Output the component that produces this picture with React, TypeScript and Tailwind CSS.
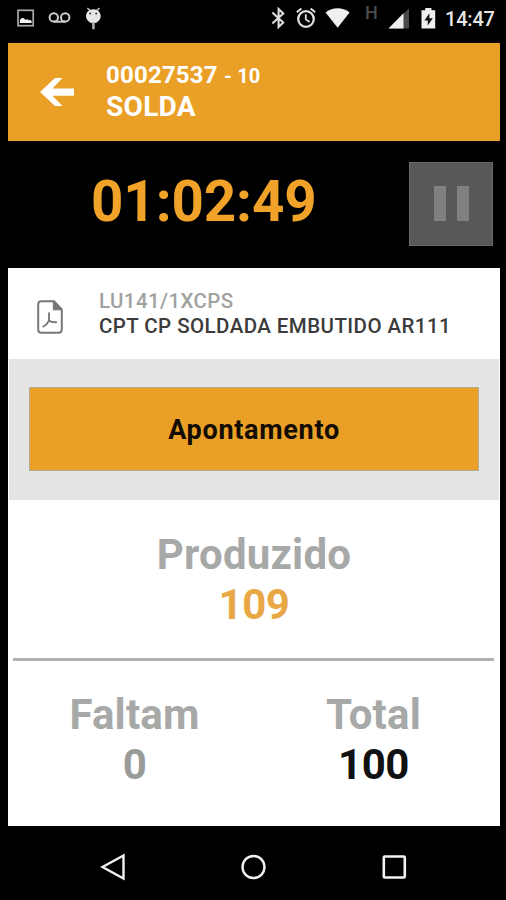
import type { ReactNode } from "react";

function StatusBar() {
  return (
    <div className="flex h-[43px] items-start pt-[7px] pl-[17px] text-[#e6e6e6]">
      {/* picture */}
      <svg width="18" height="22" viewBox="0 0 18 22" fill="none">
        <rect x="1" y="3.3" width="15.2" height="15.4" stroke="#a8a8a8" strokeWidth="1.7" />
        <path d="M2.800 16v-2.600q1-2.800 3.400-2.400 1.600.4 2.200 2 2-1.400 3.200.2 2.200-.8 3 .8v2z" fill="#f6f6f6" />
      </svg>
      {/* voicemail */}
      <svg className="ml-[13px]" width="23" height="22" viewBox="0 0 23 22" fill="none" stroke="#cfcfcf" strokeWidth="2">
        <circle cx="5.8" cy="10.4" r="4.2" />
        <circle cx="17.2" cy="10.4" r="4.2" />
        <path d="M5.8 14.7h11.4" />
      </svg>
      {/* android */}
      <svg className="ml-[14px]" width="17" height="23" viewBox="0 0 17 23" fill="none">
        <path d="M2.400 1l3 3M14.400 1l-3 3" stroke="#c4c4c4" strokeWidth="1.5" />
        <path d="M8.400 2.200c4.400 0 7.300 3 7.300 6.800 0 4-3.400 7.200-7.300 7.200S1 13 1 9c0-3.800 3-6.800 7.400-6.800z" fill="#e6e6e6" />
        <circle cx="5.2" cy="6.600" r="1" fill="#333" />
        <circle cx="11.2" cy="6.600" r="1" fill="#333" />
        <path d="M8.400 15v7.200" stroke="#b8b8b8" strokeWidth="2.400" />
      </svg>
      {/* bluetooth */}
      <svg className="ml-[169px]" width="15" height="22" viewBox="0 0 15 22" fill="none" stroke="#dedede" strokeWidth="2.1">
        <path d="M1.400 5.600l10.800 10-4.600 4.400V2l4.600 4.400L1.400 16.400" />
      </svg>
      {/* alarm */}
      <svg className="ml-[10px]" width="21" height="22" viewBox="0 0 21 22" fill="none" stroke="#dedede">
        <circle cx="10" cy="12" r="7.8" strokeWidth="2.3" />
        <path d="M.8 5.200l4.600-3.700M19.200 5.200l-4.600-3.700" strokeWidth="2" />
        <path d="M9.800 7.200v5.200l3.800 2.600" strokeWidth="1.800" />
      </svg>
      {/* wifi */}
      <svg className="ml-[8px]" width="26" height="22" viewBox="0 0 26 22">
        <path d="M.6 5.400C7.800-.2 17.400-.2 24.600 5.400L12.600 20.800z" fill="#f0f0f0" />
      </svg>
      <span className="ml-[14px] -mt-[2px] w-[13px] text-[18px] leading-[16px] font-medium text-[#4c4c4c]">H</span>
      {/* signal */}
      <svg className="ml-[10px]" width="22" height="22" viewBox="0 0 22 22">
        <path d="M.5 21.500L21 1.500v20z" fill="#4a4a4a" />
        <path d="M.5 21.500L15.500 6.200v15.300z" fill="#f0f0f0" />
      </svg>
      {/* battery */}
      <svg className="ml-[11px]" width="15" height="22" viewBox="0 0 15 22">
        <path d="M4.200 1h6.200v2.200h3.800v18.300H.5V3.200h3.700z" fill="#f0f0f0" />
        <path d="M8.400 6.200l-5 7.200h3.400v5.200l5-7.400H8.400z" fill="#111" />
      </svg>
      <span className="ml-[9px] text-[20px] leading-[24px] font-medium tracking-[-0.2px]">14:47</span>
    </div>
  );
}

function Header() {
  return (
    <header className="mx-2 flex h-[98px] w-[492px] items-center bg-[#ea9f26] pl-[32px] text-white">
      <svg width="35" height="30" viewBox="0 0 35 30">
        <path d="M0 15L15 1h7.500L12.500 11.500H34v7.200H12.500L22.500 29H15z" fill="#fff" />
      </svg>
      <div className="ml-[31px] pb-[4px] font-bold">
        <p className="h-[32px] text-[24px] leading-[32px] tracking-[0.2px] whitespace-pre">
          00027537 <span className="text-[20px]">- 10</span>
        </p>
        <p className="text-[28px] leading-[31px] tracking-[0.3px]">SOLDA</p>
      </div>
    </header>
  );
}

function Timer() {
  return (
    <section className="flex h-[127px] items-center pb-[2px] pl-[91px]">
      <p className="w-[318px] pb-[4px] text-[56.500px] leading-[60px] font-bold tracking-[-0.1px] text-[#f0a328]">01:02:49</p>
      <button className="flex h-[84px] w-[84px] items-center justify-center gap-[11px] border border-[#6a6a6a] bg-[#585858]">
        <span className="h-[35px] w-[12px] bg-[#808080]" />
        <span className="h-[35px] w-[12px] bg-[#808080]" />
      </button>
    </section>
  );
}

function PdfIcon() {
  return (
    <svg width="26" height="34" viewBox="0 0 26 34" fill="none" stroke="#777" strokeWidth="2">
      <path d="M17 1.200H4.500Q1.200 1.200 1.200 4.500v25Q1.200 32.800 4.500 32.800h17Q24.800 32.800 24.800 29.500V9.500z" />
      <path d="M16.300 1.200V9.800h8.500z" fill="#777" strokeWidth="1" />
      <path d="M12 12.500c.3 4 .2 5.800-.2 8.300-1.200 2.600-3.200 4.600-6 6.200M11.800 20.600c2.500 1.400 5 1.900 8.200 1.500" strokeWidth="1.900" />
    </svg>
  );
}

function Stat({ label, color, children }: { label: string; color: string; children: ReactNode }) {
  return (
    <div className="text-center text-[42px] leading-[50px] font-bold">
      <p className="tracking-[0.2px] text-[#a7a9a8]">{label}</p>
      <p className={`tracking-[-0.5px] ${color}`}>{children}</p>
    </div>
  );
}

export default function App() {
  return (
    <div className="flex h-[900px] w-[506px] flex-col overflow-hidden bg-black font-[Roboto,sans-serif]">
      <StatusBar />
      <Header />
      <Timer />

      <main className="mx-2 flex h-[558px] w-[492px] flex-col bg-white">
        <div className="flex h-[91px] items-center pl-[29px]">
          <div className="pt-[7px]">
            <PdfIcon />
          </div>
          <div className="ml-[36px] text-[20.500px] leading-[25px] font-medium whitespace-nowrap">
            <p className="tracking-[0.4px] text-[#a0a2a0]">LU141/1XCPS</p>
            <p className="tracking-[0.43px] text-[#3b3b3b]">CPT CP SOLDADA EMBUTIDO AR111</p>
          </div>
        </div>

        <div className="mx-[1px] h-[141px] bg-[#e4e4e4] px-[20px] pt-[28px]">
          <button className="h-[84px] w-full border border-[#b3aa98] bg-[#ea9f26] pt-[2px] text-[27px] font-bold tracking-[0.7px] text-[#120c02]">
            Apontamento
          </button>
        </div>

        <div className="h-[158px] pt-[30px]">
          <Stat label="Produzido" color="text-[#e9a846]">109</Stat>
        </div>
        <div className="mr-[6px] ml-[5px] h-[3px] shrink-0 bg-[#b0b0b0]" />
        <div className="grid grid-cols-2 pt-[29px] pr-[7px] pl-[7px]">
          <Stat label="Faltam" color="text-[#999b99]">0</Stat>
          <Stat label="Total" color="text-[#111]">100</Stat>
        </div>
      </main>

      <nav className="flex h-[74px] items-center pt-[7px] pl-[100px]">
        <svg width="26" height="28" viewBox="0 0 26 28" fill="none" stroke="#f2f2f2" strokeWidth="2.400">
          <path d="M2.500 14L23.500 2.500v23z" />
        </svg>
        <svg className="ml-[115px]" width="26" height="28" viewBox="0 0 26 28" fill="none" stroke="#f2f2f2" strokeWidth="2.400">
          <circle cx="12.500" cy="14" r="11" />
        </svg>
        <svg className="ml-[115px]" width="26" height="28" viewBox="0 0 26 28" fill="none" stroke="#f2f2f2" strokeWidth="2.600">
          <rect x="1.800" y="3.500" width="21" height="21" rx="1" />
        </svg>
      </nav>
    </div>
  );
}
